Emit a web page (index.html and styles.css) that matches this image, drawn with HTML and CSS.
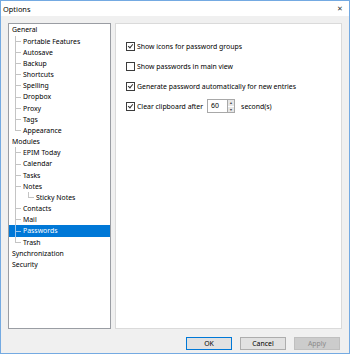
FILE: index.html
```html
<!DOCTYPE html>
<html lang="en">
<head>
    <meta charset="UTF-8">
    <link rel="stylesheet" href="styles.css">
    <title>Options</title>
</head>
<body>
<div class="window">
    <div class="titlebar">
        <span class="title">Options</span>
        <span class="close">&#x2715;</span>
    </div>

    <div class="content">
        <div class="panels">
            <!-- дерево разделов -->
            <div class="tree">
                <div class="row">General</div>
                <div class="row child">Portable Features</div>
                <div class="row child">Autosave</div>
                <div class="row child">Backup</div>
                <div class="row child">Shortcuts</div>
                <div class="row child">Spelling</div>
                <div class="row child">Dropbox</div>
                <div class="row child">Proxy</div>
                <div class="row child">Tags</div>
                <div class="row child last">Appearance</div>
                <div class="row">Modules</div>
                <div class="row child">EPIM Today</div>
                <div class="row child">Calendar</div>
                <div class="row child">Tasks</div>
                <div class="row child">Notes</div>
                <div class="row grandchild">Sticky Notes</div>
                <div class="row child">Contacts</div>
                <div class="row child">Mail</div>
                <div class="row child selected">Passwords</div>
                <div class="row child last">Trash</div>
                <div class="row">Synchronization</div>
                <div class="row">Security</div>
            </div>

            <!-- настройки паролей -->
            <div class="page">
                <label class="option">
                    <span class="check on"></span>
                    Show icons for password groups
                </label>
                <label class="option">
                    <span class="check"></span>
                    Show passwords in main view
                </label>
                <label class="option">
                    <span class="check on"></span>
                    Generate password automatically for new entries
                </label>
                <label class="option">
                    <span class="check on"></span>
                    Clear clipboard after
                    <span class="spin">
                        <span class="spin-value">60</span>
                        <span class="spin-buttons">
                            <span class="spin-btn">&#x25B2;</span>
                            <span class="spin-btn">&#x25BC;</span>
                        </span>
                    </span>
                    <span class="unit">second(s)</span>
                </label>
            </div>
        </div>

        <div class="buttons">
            <button class="btn default">OK</button>
            <button class="btn">Cancel</button>
            <button class="btn disabled">Apply</button>
        </div>
    </div>
</div>
</body>
</html>
```

FILE: styles.css
```css
/* Окно настроек */
body {
    margin: 0;
    font-family: "Noto Sans", "Liberation Sans", sans-serif;
    font-size: 6.9px;
    color: #000;
}

.window {
    width: 350px;
    height: 354px;
    box-sizing: border-box;
    border: 1px solid #74aae2;
    background: #f0f0f0;
    display: flex;
    flex-direction: column;
}

.titlebar {
    height: 15px;
    background: #fff;
    display: flex;
    align-items: center;
    justify-content: space-between;
    padding: 0 6px 0 2px;
}

.title {
    font-size: 7.4px;
}

.close {
    font-size: 7px;
    color: #333;
}

.content {
    flex: 1;
    padding: 7px 7px 3px 7px;
    display: flex;
    flex-direction: column;
}

.panels {
    display: flex;
    gap: 4px;
    height: 306px;
}

/* Дерево */
.tree {
    width: 103px;
    box-sizing: border-box;
    background: #fff;
    border: 1px solid #9a9da3;
    padding-top: 0.4px;
}

.row {
    height: 11.18px;
    line-height: 11.18px;
    padding-left: 3px;
    white-space: nowrap;
}

.child {
    padding-left: 14px;
    background:
        linear-gradient(#c4c4c4, #c4c4c4) 6px 0 / 1px 100% no-repeat,
        linear-gradient(#c4c4c4, #c4c4c4) 6px 50% / 6px 1px no-repeat;
}

.child.last {
    background:
        linear-gradient(#c4c4c4, #c4c4c4) 6px 0 / 1px 50% no-repeat,
        linear-gradient(#c4c4c4, #c4c4c4) 6px 50% / 6px 1px no-repeat;
}

.grandchild {
    padding-left: 27px;
    background:
        linear-gradient(#c4c4c4, #c4c4c4) 6px 0 / 1px 100% no-repeat,
        linear-gradient(#c4c4c4, #c4c4c4) 19px 0 / 1px 50% no-repeat,
        linear-gradient(#c4c4c4, #c4c4c4) 19px 50% / 6px 1px no-repeat;
}

.child.selected {
    color: #fff;
    background:
        linear-gradient(#9cc6ee, #9cc6ee) 6px 0 / 1px 100% no-repeat,
        linear-gradient(#9cc6ee, #9cc6ee) 6px 50% / 6px 1px no-repeat,
        #0078d7;
}

/* Страница настроек */
.page {
    flex: 1;
    background: #fff;
    border: 1px solid #dadada;
    padding: 15px 0 0 10px;
    display: flex;
    flex-direction: column;
    gap: 6px;
}

.option {
    height: 14px;
    display: flex;
    align-items: center;
    white-space: nowrap;
}

.check {
    width: 9px;
    height: 9px;
    box-sizing: border-box;
    border: 1px solid #3c3c3c;
    background: #fff;
    margin-right: 2px;
    flex: none;
    position: relative;
}

.check.on::after {
    content: "";
    position: absolute;
    left: 2px;
    top: 0.5px;
    width: 2px;
    height: 4px;
    border: solid #333;
    border-width: 0 1px 1px 0;
    transform: rotate(40deg);
}

.spin {
    display: flex;
    height: 14px;
    margin-left: 4px;
    margin-right: 6px;
}

.spin-value {
    width: 20px;
    box-sizing: border-box;
    border: 1px solid #a8a8a8;
    border-right: none;
    background: #fff;
    padding-left: 3px;
    line-height: 12px;
}

.spin-buttons {
    width: 8px;
    box-sizing: border-box;
    border: 1px solid #a8a8a8;
    display: flex;
    flex-direction: column;
}

.spin-btn {
    flex: 1;
    background: #e6e6e6;
    font-size: 3.5px;
    color: #444;
    display: flex;
    align-items: center;
    justify-content: center;
}

.spin-btn + .spin-btn {
    border-top: 1px solid #fff;
}

/* Кнопки */
.buttons {
    display: flex;
    justify-content: flex-end;
    gap: 8px;
    margin-top: 8px;
    padding-right: 2px;
}

.btn {
    width: 46px;
    height: 13px;
    padding: 0;
    font-family: inherit;
    font-size: 6.9px;
    background: #e1e1e1;
    border: 1px solid #adadad;
    color: #000;
}

.btn.default {
    border-color: #0078d7;
}

.btn.disabled {
    background: #cccccc;
    border-color: #bfbfbf;
    color: #8a8a8a;
}
```
